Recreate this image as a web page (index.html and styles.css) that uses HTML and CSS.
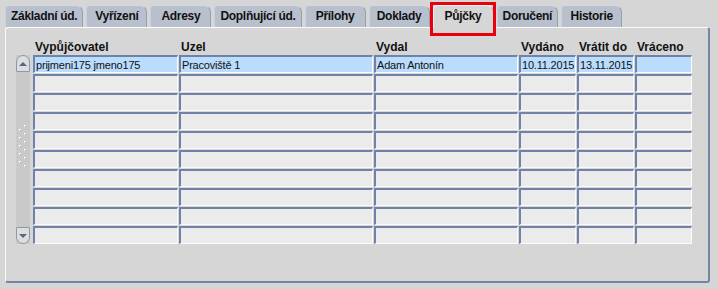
FILE: index.html
```html
<!DOCTYPE html>
<html lang="cs">
<head>
    <meta charset="UTF-8">
    <title>Půjčky</title>
    <link rel="stylesheet" href="styles.css">
</head>
<body>

<div class="tabs">
    <div class="tab">Základní úd.</div>
    <div class="tab">Vyřízení</div>
    <div class="tab">Adresy</div>
    <div class="tab">Doplňující úd.</div>
    <div class="tab">Přílohy</div>
    <div class="tab">Doklady</div>
    <div class="tab active">Půjčky</div>
    <div class="tab">Doručení</div>
    <div class="tab">Historie</div>
</div>

<div class="panel">
    <div class="table">
        <div class="head-spacer"></div>
        <div class="head">Vypůjčovatel</div>
        <div class="head">Uzel</div>
        <div class="head">Vydal</div>
        <div class="head">Vydáno</div>
        <div class="head">Vrátit do</div>
        <div class="head">Vráceno</div>

        <div class="scroll">
            <div class="scroll-btn up"><span class="arrow"></span></div>
            <div class="track">
                <svg width="8" height="44" viewBox="0 0 8 44">
                    <g fill="#fff">
                        <rect x="5" y="0" width="2" height="2"/><rect x="0" y="4" width="2" height="2"/>
                        <rect x="5" y="8" width="2" height="2"/><rect x="0" y="12" width="2" height="2"/>
                        <rect x="5" y="16" width="2" height="2"/><rect x="0" y="20" width="2" height="2"/>
                        <rect x="5" y="24" width="2" height="2"/><rect x="0" y="28" width="2" height="2"/>
                        <rect x="5" y="32" width="2" height="2"/><rect x="0" y="36" width="2" height="2"/>
                        <rect x="5" y="40" width="2" height="2"/>
                    </g>
                    <g fill="#8e99ad">
                        <rect x="6" y="1" width="1" height="1"/><rect x="1" y="5" width="1" height="1"/>
                        <rect x="6" y="9" width="1" height="1"/><rect x="1" y="13" width="1" height="1"/>
                        <rect x="6" y="17" width="1" height="1"/><rect x="1" y="21" width="1" height="1"/>
                        <rect x="6" y="25" width="1" height="1"/><rect x="1" y="29" width="1" height="1"/>
                        <rect x="6" y="33" width="1" height="1"/><rect x="1" y="37" width="1" height="1"/>
                        <rect x="6" y="41" width="1" height="1"/>
                    </g>
                </svg>
            </div>
            <div class="scroll-btn down"><span class="arrow"></span></div>
        </div>

        <!-- vybraný řádek -->
        <div class="cell sel">prijmeni175 jmeno175</div>
        <div class="cell sel">Pracoviště 1</div>
        <div class="cell sel">Adam Antonín</div>
        <div class="cell sel">10.11.2015</div>
        <div class="cell sel">13.11.2015</div>
        <div class="cell sel"></div>

        <div class="cell"></div><div class="cell"></div><div class="cell"></div><div class="cell"></div><div class="cell"></div><div class="cell"></div>
        <div class="cell"></div><div class="cell"></div><div class="cell"></div><div class="cell"></div><div class="cell"></div><div class="cell"></div>
        <div class="cell"></div><div class="cell"></div><div class="cell"></div><div class="cell"></div><div class="cell"></div><div class="cell"></div>
        <div class="cell"></div><div class="cell"></div><div class="cell"></div><div class="cell"></div><div class="cell"></div><div class="cell"></div>
        <div class="cell"></div><div class="cell"></div><div class="cell"></div><div class="cell"></div><div class="cell"></div><div class="cell"></div>
        <div class="cell"></div><div class="cell"></div><div class="cell"></div><div class="cell"></div><div class="cell"></div><div class="cell"></div>
        <div class="cell"></div><div class="cell"></div><div class="cell"></div><div class="cell"></div><div class="cell"></div><div class="cell"></div>
        <div class="cell"></div><div class="cell"></div><div class="cell"></div><div class="cell"></div><div class="cell"></div><div class="cell"></div>
        <div class="cell"></div><div class="cell"></div><div class="cell"></div><div class="cell"></div><div class="cell"></div><div class="cell"></div>
    </div>
</div>

</body>
</html>
```

FILE: styles.css
```css
body {
    background-color: #d6d6d6;
    color: #111;
    font-family: "Liberation Sans", Arial, sans-serif;
    font-size: 12px;
    margin: 0;
    padding: 5px 8px 0 5px;
}
.tabs {
    display: flex;
    gap: 3px;
    height: 22px;
}
.tab {
    position: relative;
    box-sizing: border-box;
    min-width: 61px;
    padding: 0 5px;
    line-height: 21px;
    text-align: center;
    font-weight: bold;
    letter-spacing: -0.3px;
    background-color: #b8c0cd;
    border-top: 1px solid #d3d8e0;
    border-left: 1px solid #ccd2dc;
    border-right: 1px solid #949fb2;
    border-radius: 4px 7px 0 0;
}
.tab.active {
    background-color: #d6d6d6;
    border-top-color: #f4f4f4;
    border-left-color: #f4f4f4;
    border-right-color: #a8a8a8;
    height: 23px;
    z-index: 1;
}
.tab.active::after {
    content: "";
    position: absolute;
    top: -4px;
    left: -4px;
    right: -3px;
    bottom: -8px;
    border: 3px solid #e8000d;
}
.panel {
    height: 256px;
    box-sizing: border-box;
    border-top: 1px solid #fafafa;
    border-left: 1px solid #fafafa;
    border-right: 2px solid #7585a6;
    border-bottom: 2px solid #7585a6;
    border-radius: 3px;
    padding: 12px 0 0 10px;
}
.table {
    display: grid;
    grid-template-columns: 16px 145px 194px 144px 57px 57px 57px;
    grid-template-rows: 14px repeat(10, 18px);
    column-gap: 1px;
    row-gap: 1px;
}
.head {
    font-weight: bold;
    font-size: 12px;
    line-height: 14px;
    padding-left: 2px;
    margin-bottom: 2px;
    white-space: nowrap;
}
.scroll {
    grid-row: 2 / span 10;
    width: 14px;
    display: flex;
    flex-direction: column;
    background-color: #c9c9c9;
}
.scroll-btn {
    box-sizing: border-box;
    height: 17px;
    background-color: #dedede;
    border: 1px solid #8d98ac;
    display: flex;
    justify-content: center;
    align-items: center;
}
.scroll-btn.up {
    border-radius: 7px 7px 1px 1px;
}
.scroll-btn.down {
    border-radius: 1px 1px 7px 7px;
}
.arrow {
    width: 0;
    height: 0;
    border-left: 4px solid transparent;
    border-right: 4px solid transparent;
}
.up .arrow {
    border-bottom: 4px solid #53668c;
}
.down .arrow {
    border-top: 4px solid #53668c;
}
.track {
    flex: 1;
    display: flex;
    justify-content: center;
    align-items: center;
    padding-bottom: 6px;
}
.cell {
    box-sizing: border-box;
    height: 18px;
    background-color: #ebebeb;
    border-top: 2px solid #7082a8;
    border-left: 2px solid #7082a8;
    border-right: 1px solid #fbfbfb;
    border-bottom: 1px solid #fbfbfb;
    padding: 1px 0 0 1px;
    font-size: 11px;
    letter-spacing: -0.2px;
    line-height: 14px;
    white-space: nowrap;
    overflow: hidden;
}
.cell.sel {
    background-color: #badcfd;
}
```
